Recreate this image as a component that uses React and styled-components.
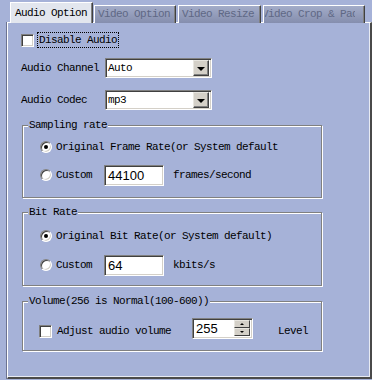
import React from "react";
import styled, { createGlobalStyle } from "styled-components";

const Global = createGlobalStyle`
	body {
		margin: 0;
		background: #a6b2d8;
		font-family: "Liberation Mono", "DejaVu Sans Mono", monospace;
		font-size: 11px;
		letter-spacing: -0.6px;
		color: #000;
	}
	* {
		box-sizing: border-box;
	}
`;

const Window = styled.div`
	width: 372px;
	height: 380px;
	padding-top: 2px;
	overflow: hidden;
`;

const TabStrip = styled.div`
	display: flex;
	align-items: flex-end;
	height: 21px;
	padding-left: 10px;
	margin-bottom: -1px;
	position: relative;
	z-index: 1;
`;

const Tab = styled.div`
	width: ${(p) => p.$w}px;
	height: ${(p) => (p.$active ? 21 : 18)}px;
	margin-right: ${(p) => (p.$active ? 1 : 2)}px;
	padding-left: ${(p) => (p.$active ? 4 : 3)}px;
	line-height: ${(p) => (p.$active ? 20 : 17)}px;
	white-space: nowrap;
	overflow: hidden;
	border: 1px solid;
	border-bottom: none;
	border-color: #fff #404040 transparent #fff;
	box-shadow: inset -1px 0 0 #808080;
	background: ${(p) =>
		p.$active ? "#e2e6ee" : "linear-gradient(#a3acc8, #858eae)"};
	color: ${(p) => (p.$active ? "#000" : "#5f6885")};
`;

const ClipText = styled.span`
	display: block;
	width: 90px;
	overflow: hidden;
	text-indent: -3px;
	margin-left: -2px;
`;

const Panel = styled.div`
	width: 365px;
	height: 357px;
	margin-left: 7px;
	padding: 0 0 0 13px;
	border: 1px solid;
	border-width: 1px 2px 2px 1px;
	border-color: #fff #4a4a4a #4a4a4a #fff;
	box-shadow: inset -1px -1px 0 #e8ebf3, -1px 0 0 #6c7391;
	display: flex;
	flex-direction: column;
`;

const CheckRow = styled.div`
	display: flex;
	align-items: center;
	height: 16px;
	margin-top: 9px;
`;

const Check = styled.span`
	width: 13px;
	height: 13px;
	flex: none;
	background: #fff;
	border: 1px solid;
	border-color: #808080 #fff #fff #808080;
	box-shadow: inset 1px 1px 0 #404040, inset -1px -1px 0 #d4d0c8;
`;

const FocusLabel = styled.span`
	margin-left: 3px;
	height: 16px;
	line-height: 14px;
	padding: 0 1px;
	border: 1px dotted #000;
`;

const FieldRow = styled.div`
	display: flex;
	align-items: center;
	height: 20px;
	margin-top: ${(p) => p.$top}px;
`;

const FieldLabel = styled.span`
	width: 84px;
`;

const Select = styled.div`
	width: 107px;
	height: 20px;
	display: flex;
	align-items: center;
	justify-content: space-between;
	background: #fff;
	border: 1px solid;
	border-color: #808080 #fff #fff #808080;
	box-shadow: inset 1px 1px 0 #404040, inset -1px -1px 0 #d4d0c8;
	padding: 1px 1px 1px 2px;
`;

const ArrowButton = styled.span`
	width: 16px;
	height: 16px;
	margin-right: 1px;
	background: #d4d0c8;
	border: 1px solid;
	border-color: #e8e6e0 #404040 #404040 #e8e6e0;
	box-shadow: inset -1px -1px 0 #808080;
	display: flex;
	align-items: center;
	justify-content: center;
	&::after {
		content: "";
		border-left: 4px solid transparent;
		border-right: 4px solid transparent;
		border-top: 4px solid #000;
		margin: 1px 1px 0 0;
	}
`;

const Group = styled.div`
	position: relative;
	width: 300px;
	height: ${(p) => p.$h}px;
	margin: ${(p) => p.$top}px 0 0 1px;
	padding: ${(p) => p.$pt}px 0 0 ${(p) => p.$pl}px;
	border: 1px solid #808080;
	box-shadow: 1px 1px 0 #fff, inset 1px 1px 0 #fff;
	display: flex;
	flex-direction: column;
	gap: ${(p) => p.$gap || 0}px;
`;

const Legend = styled.span`
	position: absolute;
	top: -7px;
	left: 5px;
	line-height: 12px;
	padding: 0 1px;
	background: #a6b2d8;
`;

const OptionRow = styled.div`
	display: flex;
	align-items: center;
	height: 20px;
`;

const Radio = styled.span`
	position: relative;
	width: 12px;
	height: 12px;
	flex: none;
	border-radius: 50%;
	background: #fff;
	border: 1px solid;
	border-color: #808080 #fff #fff #808080;
	box-shadow: inset 1px 1px 0 #404040, inset -1px -1px 0 #d4d0c8;
	&::after {
		content: "";
		display: ${(p) => (p.$on ? "block" : "none")};
		position: absolute;
		left: 3px;
		top: 3px;
		width: 4px;
		height: 4px;
		border-radius: 50%;
		background: #000;
	}
`;

const OptionText = styled.span`
	margin-left: ${(p) => p.$ml || 4}px;
	white-space: nowrap;
`;

const TextBox = styled.div`
	width: ${(p) => p.$w}px;
	height: 21px;
	margin-left: ${(p) => p.$ml}px;
	background: #fff;
	border: 1px solid;
	border-color: #808080 #fff #fff #808080;
	box-shadow: inset 1px 1px 0 #404040, inset -1px -1px 0 #d4d0c8;
	padding: 2px 0 0 3px;
	font-family: "Liberation Sans", Arial, sans-serif;
	font-size: 13px;
	letter-spacing: 0;
	line-height: 16px;
	display: flex;
	justify-content: space-between;
	margin-bottom: ${(p) => p.$raise || 0}px;
`;

const Spinner = styled.span`
	display: flex;
	flex-direction: column;
	margin: -1px 2px 0 0;
`;

const SpinButton = styled.span`
	width: 16px;
	height: 8px;
	background: #d4d0c8;
	border: 1px solid;
	border-color: #e8e6e0 #404040 #404040 #e8e6e0;
	display: flex;
	align-items: center;
	justify-content: center;
	&::after {
		content: "";
		border-left: 2px solid transparent;
		border-right: 2px solid transparent;
		${(p) => (p.$up ? "border-bottom" : "border-top")}: 2px solid #000;
	}
`;

function RadioOption({ on, children }) {
	return (
		<OptionRow>
			<Radio $on={on} />
			<OptionText>{children}</OptionText>
		</OptionRow>
	);
}

function CustomOption({ value, unit }) {
	return (
		<OptionRow>
			<Radio />
			<OptionText>Custom</OptionText>
			<TextBox $w={60} $ml={12}>
				{value}
			</TextBox>
			<OptionText $ml={9}>{unit}</OptionText>
		</OptionRow>
	);
}

export default function App() {
	return (
		<Window>
			<Global />
			<TabStrip>
				<Tab $active $w={83}>
					Audio Option
				</Tab>
				<Tab $w={82}>Video Option</Tab>
				<Tab $w={83}>Video Resize</Tab>
				<Tab $w={102}>
					<ClipText>Video Crop &amp; Pad</ClipText>
				</Tab>
			</TabStrip>
			<Panel>
				<CheckRow>
					<Check />
					<FocusLabel>Disable Audio</FocusLabel>
				</CheckRow>
				<FieldRow $top={10}>
					<FieldLabel>Audio Channel</FieldLabel>
					<Select>
						Auto
						<ArrowButton />
					</Select>
				</FieldRow>
				<FieldRow $top={12}>
					<FieldLabel>Audio Codec</FieldLabel>
					<Select>
						mp3
						<ArrowButton />
					</Select>
				</FieldRow>

				<Group $top={15} $h={73} $pt={11} $pl={17} $gap={8}>
					<Legend>Sampling rate</Legend>
					<RadioOption on>Original Frame Rate(or System default</RadioOption>
					<CustomOption value="44100" unit="frames/second" />
				</Group>

				<Group $top={14} $h={74} $pt={13} $pl={17} $gap={9}>
					<Legend>Bit Rate</Legend>
					<RadioOption on>Original Bit Rate(or System default)</RadioOption>
					<CustomOption value="64" unit="kbits/s" />
				</Group>

				<Group $top={15} $h={50} $pt={19} $pl={16}>
					<Legend>Volume(256 is Normal(100-600))</Legend>
					<OptionRow>
						<Check />
						<OptionText $ml={5}>Adjust audio volume</OptionText>
						<TextBox $w={61} $ml={21} $raise={5}>
							255
							<Spinner>
								<SpinButton $up />
								<SpinButton />
							</Spinner>
						</TextBox>
						<OptionText $ml={25}>Level</OptionText>
					</OptionRow>
				</Group>
			</Panel>
		</Window>
	);
}
